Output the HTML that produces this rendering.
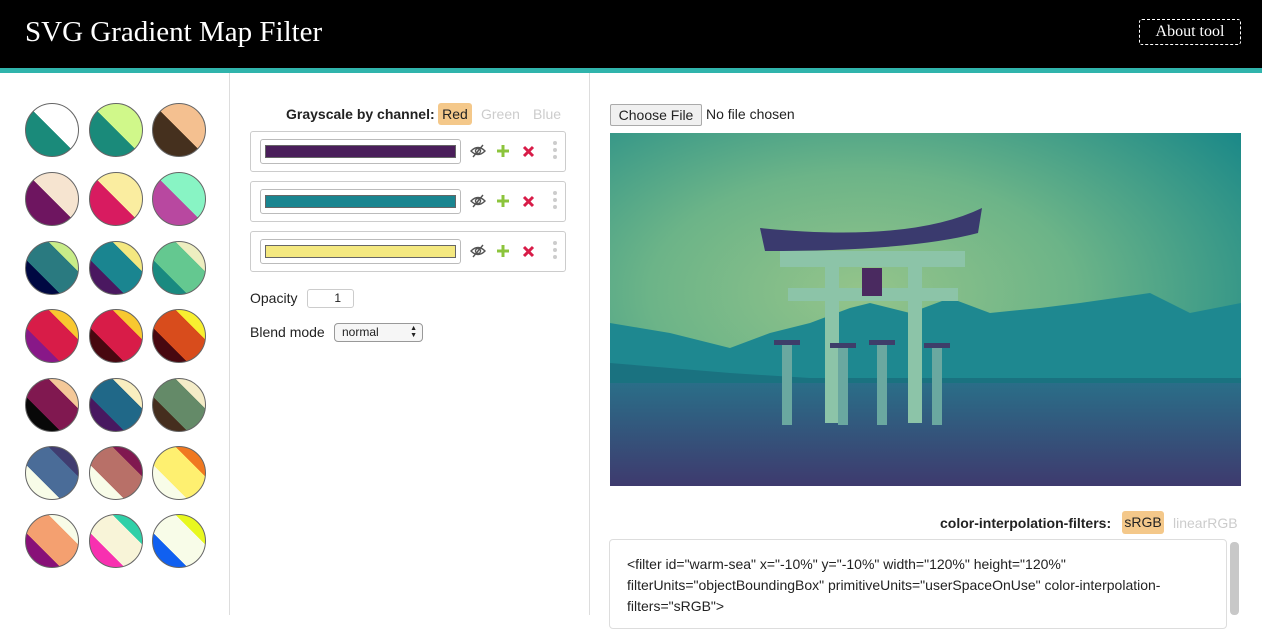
<!DOCTYPE html>
<html><head><meta charset="utf-8"><style>
*{box-sizing:border-box;margin:0;padding:0}
body{width:1262px;height:615px;overflow:hidden;background:#fff;font-family:"Liberation Sans",sans-serif;position:relative;color:#222}
.hdr{position:absolute;left:0;top:0;width:1262px;height:68px;background:#000}
.teal{position:absolute;left:0;top:68px;width:1262px;height:5px;background:#30b4ac}
.title{position:absolute;left:25px;top:16px;color:#fff;font-family:"Liberation Serif",serif;font-size:29px}
.about{position:absolute;left:1139px;top:19px;width:102px;height:26px;border:1px dashed #fff;border-radius:3px;color:#fff;font-family:"Liberation Serif",serif;font-size:16px;text-align:center;line-height:24px}
.vl{position:absolute;top:73px;width:1px;height:542px;background:#ddd}
.c{position:absolute;width:54px;height:54px;border-radius:50%;border:1px solid #666}
.lbl{position:absolute;font-size:14px}
.box{position:absolute;left:250px;width:316px;height:41px;border:1px solid #ccc;border-radius:3px}
.bar{position:absolute;left:9px;top:7px;width:201px;height:25px;border:1px solid #bbb;border-radius:3px}
.bar i{position:absolute;left:4px;top:5px;right:4px;bottom:5px;border:1px solid #666}
.ic{position:absolute;top:8px}
.dots{position:absolute;left:302px;top:9px;width:4px}
.dots b{display:block;width:4px;height:4px;border-radius:2px;background:#ccc;margin-bottom:3px}
</style></head><body>
<div class="hdr"></div><div class="teal"></div>
<div class="title">SVG Gradient Map Filter</div>
<div class="about">About tool</div>
<div class="vl" style="left:229px"></div>
<div class="vl" style="left:589px"></div>

<div class="c" style="left:25px;top:103px;background:linear-gradient(45deg,#1a8a7a 50%,#fff 50%)"></div>
<div class="c" style="left:89px;top:103px;background:linear-gradient(45deg,#1a8a7a 50%,#d0f88a 50%)"></div>
<div class="c" style="left:152px;top:103px;background:linear-gradient(45deg,#45301e 50%,#f4c090 50%)"></div>
<div class="c" style="left:25px;top:172px;background:linear-gradient(45deg,#6e1560 50%,#f6e4d0 50%)"></div>
<div class="c" style="left:89px;top:172px;background:linear-gradient(45deg,#d81b60 50%,#faeda0 50%)"></div>
<div class="c" style="left:152px;top:172px;background:linear-gradient(45deg,#b848a0 50%,#88f4c4 50%)"></div>
<div class="c" style="left:25px;top:241px;background:linear-gradient(45deg,#000842 33%,#2a7a80 33%,#2a7a80 72%,#c8ec88 72%)"></div>
<div class="c" style="left:89px;top:241px;background:linear-gradient(45deg,#4a1860 33%,#1a8590 33%,#1a8590 72%,#f4e880 72%)"></div>
<div class="c" style="left:152px;top:241px;background:linear-gradient(45deg,#1a8a80 33%,#64c890 33%,#64c890 72%,#eeeec0 72%)"></div>
<div class="c" style="left:25px;top:309px;background:linear-gradient(45deg,#881888 33%,#d81c48 33%,#d81c48 72%,#f8c830 72%)"></div>
<div class="c" style="left:89px;top:309px;background:linear-gradient(45deg,#480810 33%,#d81c48 33%,#d81c48 72%,#f8c830 72%)"></div>
<div class="c" style="left:152px;top:309px;background:linear-gradient(45deg,#480810 33%,#d84c1c 33%,#d84c1c 72%,#f8f030 72%)"></div>
<div class="c" style="left:25px;top:378px;background:linear-gradient(45deg,#080808 33%,#801850 33%,#801850 72%,#f4c898 72%)"></div>
<div class="c" style="left:89px;top:378px;background:linear-gradient(45deg,#481860 33%,#206888 33%,#206888 72%,#f8eec0 72%)"></div>
<div class="c" style="left:152px;top:378px;background:linear-gradient(45deg,#452e1e 33%,#648a68 33%,#648a68 72%,#f4ecc8 72%)"></div>
<div class="c" style="left:25px;top:446px;background:linear-gradient(45deg,#f8fce8 33%,#4a6c98 33%,#4a6c98 72%,#403c70 72%)"></div>
<div class="c" style="left:89px;top:446px;background:linear-gradient(45deg,#f8fce8 33%,#b87068 33%,#b87068 72%,#801850 72%)"></div>
<div class="c" style="left:152px;top:446px;background:linear-gradient(45deg,#f8fce8 33%,#fef070 33%,#fef070 72%,#f07820 72%)"></div>
<div class="c" style="left:25px;top:514px;background:linear-gradient(45deg,#881078 33%,#f4a070 33%,#f4a070 72%,#f8fce8 72%)"></div>
<div class="c" style="left:89px;top:514px;background:linear-gradient(45deg,#f830b0 33%,#f8f4d8 33%,#f8f4d8 72%,#30d0a8 72%)"></div>
<div class="c" style="left:152px;top:514px;background:linear-gradient(45deg,#1060f0 33%,#f8fce8 33%,#f8fce8 72%,#e8f820 72%)"></div>

<div class="lbl" style="left:286px;top:106px;font-weight:bold">Grayscale by channel:</div>
<div class="lbl" style="left:438px;top:103px;width:34px;height:22px;background:#f4c88a;border-radius:3px;text-align:center;line-height:22px">Red</div>
<div class="lbl" style="left:481px;top:106px;color:#ccc">Green</div>
<div class="lbl" style="left:533px;top:106px;color:#ccc">Blue</div>

<div class="box" style="top:131px"><div class="bar"><i style="background:#4a1e5a"></i></div>
<svg class="ic" style="left:219px;top:11px" width="16" height="16" viewBox="0 0 16 16" fill="none" stroke="#555" stroke-width="1.4"><path d="M1 8 Q8 1 15 8 Q8 15 1 8Z"/><circle cx="8" cy="8" r="2.5"/><path d="M3 14 L13 2"/></svg>
<svg class="ic" style="left:245px;top:12px" width="14" height="14"><path d="M7 1V13M1 7H13" stroke="#8cc43c" stroke-width="3"/></svg>
<svg class="ic" style="left:271px;top:13px" width="13" height="13"><path d="M2 2L11 11M11 2L2 11" stroke="#d81c48" stroke-width="3"/></svg>
<div class="dots"><b></b><b></b><b></b></div></div>
<div class="box" style="top:181px"><div class="bar"><i style="background:#1a8590"></i></div>
<svg class="ic" style="left:219px;top:11px" width="16" height="16" viewBox="0 0 16 16" fill="none" stroke="#555" stroke-width="1.4"><path d="M1 8 Q8 1 15 8 Q8 15 1 8Z"/><circle cx="8" cy="8" r="2.5"/><path d="M3 14 L13 2"/></svg>
<svg class="ic" style="left:245px;top:12px" width="14" height="14"><path d="M7 1V13M1 7H13" stroke="#8cc43c" stroke-width="3"/></svg>
<svg class="ic" style="left:271px;top:13px" width="13" height="13"><path d="M2 2L11 11M11 2L2 11" stroke="#d81c48" stroke-width="3"/></svg>
<div class="dots"><b></b><b></b><b></b></div></div>
<div class="box" style="top:231px"><div class="bar"><i style="background:#f4e880"></i></div>
<svg class="ic" style="left:219px;top:11px" width="16" height="16" viewBox="0 0 16 16" fill="none" stroke="#555" stroke-width="1.4"><path d="M1 8 Q8 1 15 8 Q8 15 1 8Z"/><circle cx="8" cy="8" r="2.5"/><path d="M3 14 L13 2"/></svg>
<svg class="ic" style="left:245px;top:12px" width="14" height="14"><path d="M7 1V13M1 7H13" stroke="#8cc43c" stroke-width="3"/></svg>
<svg class="ic" style="left:271px;top:13px" width="13" height="13"><path d="M2 2L11 11M11 2L2 11" stroke="#d81c48" stroke-width="3"/></svg>
<div class="dots"><b></b><b></b><b></b></div></div>

<div class="lbl" style="left:250px;top:290px">Opacity</div>
<div class="lbl" style="left:307px;top:289px;width:47px;height:19px;border:1px solid #ccc;border-radius:3px;text-align:right;padding-right:12px;font-size:12px;line-height:17px">1</div>
<div class="lbl" style="left:250px;top:324px">Blend mode</div>
<div class="lbl" style="left:334px;top:323px;width:89px;height:19px;border:1px solid #999;border-radius:4px;font-size:12px;line-height:17px;padding-left:7px;background:#f6f6f6">normal<span style="position:absolute;right:5px;font-size:7px;top:1px;line-height:7px">▲<br>▼</span></div>

<div class="lbl" style="left:610px;top:104px;width:92px;height:22px;border:1px solid #aaa;border-radius:2px;background:#f0f0f0;text-align:center;line-height:20px">Choose File</div>
<div class="lbl" style="left:706px;top:106px">No file chosen</div>

<svg style="position:absolute;left:610px;top:133px" width="631" height="353" viewBox="0 0 631 353">
<defs>
<radialGradient id="sky" cx="0.4" cy="0.45" r="0.75"><stop offset="0" stop-color="#94c48a"/><stop offset="0.45" stop-color="#6cb488"/><stop offset="1" stop-color="#1a8888"/></radialGradient>
<linearGradient id="sea" x1="0" y1="0" x2="0" y2="1"><stop offset="0" stop-color="#2a6e88"/><stop offset="1" stop-color="#3e3a6e"/></linearGradient>
</defs>
<rect width="631" height="353" fill="url(#sky)"/>
<path d="M0 190 L30 195 L60 200 L120 215 L160 200 L200 190 L240 175 L260 170 L300 180 L340 165 L380 180 L430 175 L470 170 L540 160 L580 180 L631 170 L631 260 L0 260Z" fill="#1e8890"/>
<path d="M0 230 L120 240 L200 245 L631 245 L631 260 L0 260Z" fill="#1a7280"/>
<rect y="250" width="631" height="103" fill="url(#sea)"/>
<path d="M150 95 Q300 110 372 75 L368 100 Q300 118 155 118Z" fill="#3a3a6e"/>
<g fill="#8cc4a8">
<rect x="170" y="118" width="185" height="16"/>
<rect x="178" y="155" width="170" height="13"/>
<rect x="215" y="125" width="14" height="165"/>
<rect x="298" y="125" width="14" height="165"/>
</g>
<g fill="#6aa8a0"><rect x="172" y="212" width="10" height="80"/><rect x="228" y="215" width="10" height="77"/>
<rect x="267" y="212" width="10" height="80"/><rect x="322" y="215" width="10" height="77"/></g>
<g fill="#3e3e6a"><rect x="164" y="207" width="26" height="5"/><rect x="220" y="210" width="26" height="5"/><rect x="259" y="207" width="26" height="5"/><rect x="314" y="210" width="26" height="5"/></g>
<rect x="252" y="135" width="20" height="28" fill="#4a2a60"/>
</svg>

<div class="lbl" style="left:940px;top:515px;font-weight:bold">color-interpolation-filters:</div>
<div class="lbl" style="left:1122px;top:511px;width:42px;height:23px;background:#f4c88a;border-radius:3px;text-align:center;line-height:23px">sRGB</div>
<div class="lbl" style="left:1173px;top:515px;color:#ccc">linearRGB</div>
<div style="position:absolute;left:609px;top:539px;width:618px;height:90px;border:1px solid #ddd;border-radius:4px;padding:14px 0 0 17px;font-size:14px;line-height:21px;color:#222">&lt;filter id="warm-sea" x="-10%" y="-10%" width="120%" height="120%"<br>filterUnits="objectBoundingBox" primitiveUnits="userSpaceOnUse" color-interpolation-<br>filters="sRGB"&gt;</div>
<div style="position:absolute;left:1230px;top:542px;width:9px;height:73px;background:#c8c8c8;border-radius:4px"></div>
</body></html>
